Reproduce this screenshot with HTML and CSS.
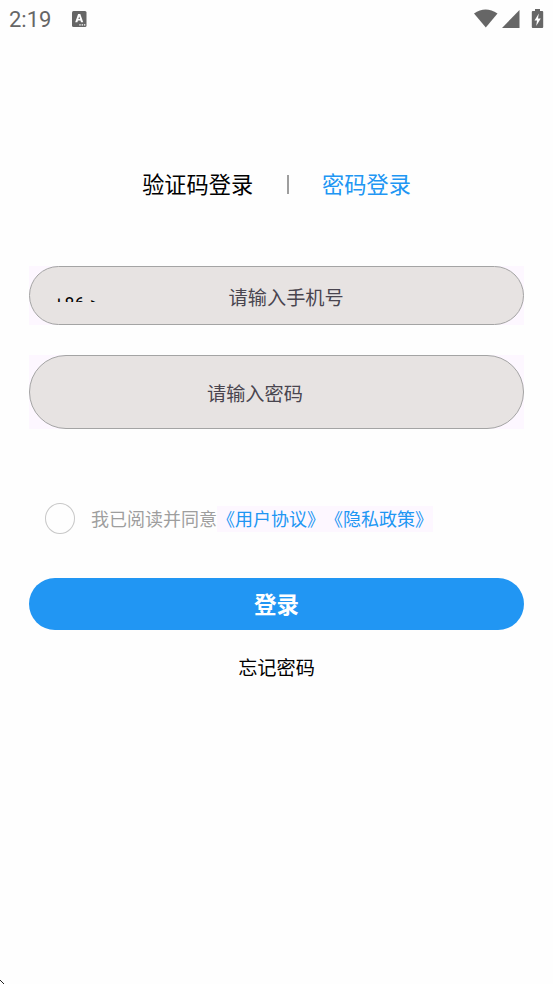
FILE: index.html
```
<!DOCTYPE html>
<html lang="zh-CN">
<head>
    <meta charset="UTF-8">
    <meta name="viewport" content="width=device-width, initial-scale=1.0">
    <title>密码登录</title>
    <link rel="stylesheet" href="styles.css">
</head>
<body>
    <header class="status-bar">
        <span class="time">2:19</span>
        <svg class="app-icon" width="15" height="16" viewBox="0 0 15 16">
            <rect width="14.5" height="16" rx="1.5" fill="#666"/>
            <path d="M3.2 11.2 L6.1 3h2.2 L11.2 11.2 H9 L8.5 9.6 H5.9 L5.4 11.2Z M6.4 8h1.6L7.2 5.4Z" fill="#fff" fill-rule="evenodd"/>
            <path d="M7.3 13.8h1.4M9.6 13.8h1.4M11.9 13.8h1.4" stroke="#fff" stroke-width="1.2"/>
        </svg>
        <svg class="system-icons" width="70" height="20" viewBox="0 0 70 20" fill="#666">
            <path d="M0 4.5 Q11.5-3.5 23.5 4.5 L11.8 18.5Z"/>
            <path d="M45.5 1 V19 H28Z"/>
            <path d="M61 0h5v2h2.2q1 0 1 1v15q0 1-1 1h-9.4q-1 0-1-1v-15q0-1 1-1h2.2z"/>
            <path d="M64.8 4.5 L60.5 11.5 H63 L62.2 17 L66.8 9.5 H64Z" fill="#fff"/>
        </svg>
    </header>

    <main>
        <nav class="tabs">
            <span>验证码登录</span>
            <i class="divider"></i>
            <span class="active">密码登录</span>
        </nav>

        <form>
            <div class="field-wrap">
                <div class="field phone">
                    <span class="area-code">+86 &gt;</span>
                    <span class="hint">请输入手机号</span>
                </div>
            </div>
            <div class="field-wrap">
                <div class="field password">
                    <span class="hint">请输入密码</span>
                </div>
            </div>

            <div class="agreement">
                <span class="radio"></span>
                <span>我已阅读并同意</span><span class="links">《用户协议》《隐私政策》</span>
            </div>

            <button type="button">登录</button>
        </form>

        <div class="forgot">忘记密码</div>
    </main>

    <svg class="corner" width="4" height="4" viewBox="0 0 4 4">
        <path d="M0 0h1v1h1v1h-1v-1h-1zM2 2h1v1h1v1h-1v-1h-1z" fill="#222"/>
    </svg>
</body>
</html>
```
FILE: styles.css
```
* {
    box-sizing: border-box;
}
body {
    margin: 0;
    height: 984px;
    overflow: hidden;
    background-color: #fefefe;
    color: #000;
    font-family: Roboto, "Noto Sans CJK SC", sans-serif;
    text-spacing-trim: space-all;
    display: flex;
    flex-direction: column;
}
.status-bar {
    height: 38px;
    padding: 0 9px 0 9px;
    display: flex;
    align-items: center;
    color: #666;
}
.time {
    width: 63px;
    padding-top: 1px;
    font-size: 22px;
    line-height: 38px;
}
.app-icon {
    display: block;
}
.system-icons {
    margin-left: auto;
    margin-bottom: 1px;
}
main {
    flex: 1;
    padding: 0 29px;
}
.tabs {
    margin-top: 129px;
    height: 34px;
    display: flex;
    justify-content: center;
    align-items: center;
    font-size: 22.2px;
    line-height: 34px;
}
.tabs span {
    padding-top: 2px;
}
.divider {
    width: 2px;
    height: 19px;
    margin: 0 33px 0 34px;
    background-color: #9e9e9e;
}
.active {
    color: #2196f3;
}
form {
    margin-top: 65px;
}
.field-wrap {
    background-color: #fdf7ff;
    margin-bottom: 30px;
}
.field {
    display: flex;
    align-items: center;
    border: 1px solid #a4a4a4;
    border-radius: 40px;
    background-color: #e7e3e2;
    color: #49454f;
    font-size: 19.2px;
}
.hint {
    padding-top: 2px;
}
.phone {
    height: 59px;
    padding-left: 24px;
}
.password {
    height: 74px;
    padding-left: 177px;
}
/* the code sits in a box too short for it, so only its top shows */
.area-code {
    width: 174.6px;
    height: 10px;
    margin-top: 2px;
    overflow: hidden;
    color: #000;
    font-size: 17.5px;
    line-height: 25px;
    letter-spacing: 0.5px;
}
.agreement {
    display: flex;
    align-items: center;
    margin-top: 74px;
    height: 31px;
    padding-left: 16px;
    color: #9e9e9e;
    font-size: 18px;
    line-height: 24px;
}
.agreement span + span {
    padding-top: 2px;
}
.radio {
    width: 30px;
    height: 31px;
    margin-right: 16px;
    border: 1.5px solid #c8c8c8;
    border-radius: 50%;
}
.links {
    background-color: #fdf7ff;
    color: #2196f3;
}
button {
    display: block;
    width: 100%;
    height: 52px;
    margin-top: 44px;
    padding: 0 0 2px;
    border: none;
    border-radius: 26px;
    background-color: #2196f3;
    color: #fff;
    font-family: inherit;
    font-size: 22.5px;
    font-weight: bold;
}
.forgot {
    margin-top: 25px;
    text-align: center;
    font-size: 19.2px;
    line-height: 28px;
}
.corner {
    display: block;
}
```
